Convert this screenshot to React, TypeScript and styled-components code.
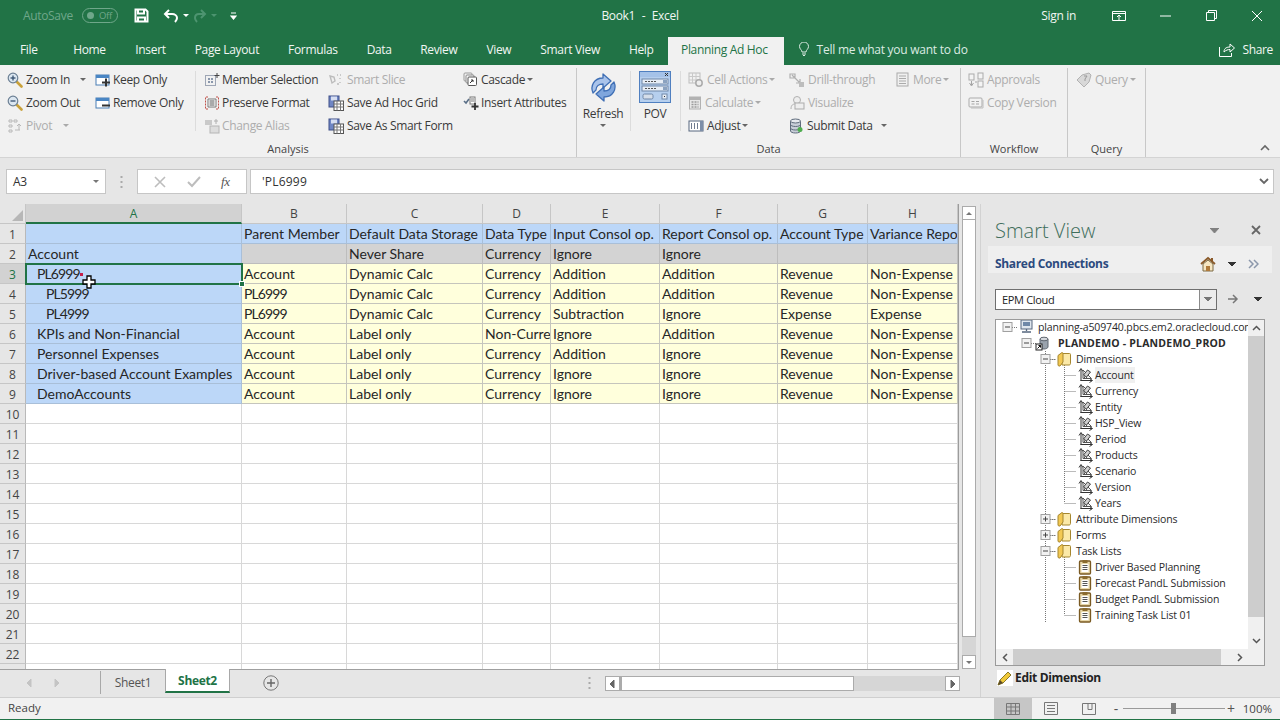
import React from 'react';
import styled, { createGlobalStyle } from 'styled-components';

const UI = '"Open Sans", "Noto Sans", sans-serif';

const Global = createGlobalStyle`
  html, body { margin: 0; padding: 0; background: #e6e6e6; overflow: hidden; }
  * { box-sizing: border-box; }
`;

const Page = styled.div`
  width: 1280px; height: 720px; display: flex; flex-direction: column; overflow: hidden;
  font-family: ${UI}; font-size: 12px; letter-spacing: -0.33px; color: #333; background: #e6e6e6;
`;

/* ---------- title bar ---------- */
const TitleBar = styled.header`
  height: 37px; flex: none; background: #217346; color: #f1f6f3;
  display: grid; grid-template-columns: 1fr auto 1fr; align-items: center; padding-bottom: 6px;
`;
const Quick = styled.div`display: flex; align-items: center; padding-left: 23px;`;
const AutoSave = styled.span`color: #6fa78a; font-size: 12px; width: 59px;`;
const Toggle = styled.span`
  width: 36px; height: 15px; border: 1px solid #6fa78a; border-radius: 8px; color: #6fa78a;
  font-size: 9.5px; display: flex; align-items: center; padding-left: 4px; gap: 5px; margin-right: 16px;
  &::before { content: ''; width: 7px; height: 7px; border-radius: 50%; background: #6fa78a; }
`;
const QuickBtn = styled.span<{ $w: number }>`width: ${p => p.$w}px; display: flex; align-items: center; gap: 4px;`;
const TitleText = styled.div`font-size: 12px; white-space: pre; word-spacing: 0.5px;`;
const WinControls = styled.div`display: flex; align-items: center; justify-content: flex-end;`;
const SignIn = styled.span`font-size: 12px; margin-right: 20px;`;
const WinBtn = styled.span`width: 46px; display: flex; justify-content: center;`;

/* ---------- tabs ---------- */
const TabBar = styled.nav`
  height: 28px; flex: none; background: #217346; color: #f1f6f3; display: flex; align-items: stretch;
`;
const Tab = styled.span<{ $active?: boolean; $pl?: number; $pr?: number }>`
  display: flex; align-items: center; font-size: 12px; padding: 0 ${p => p.$pr ?? 14.5}px 4px ${p => p.$pl ?? 14.5}px;
  ${p => p.$active ? 'background:#f1f1f1;color:#217346;padding-bottom:4px;' : ''}
`;
const TellMe = styled.span`display: flex; align-items: center; gap: 8px; padding: 0 0 4px 15px; color: #dcebe3; font-size: 12px; letter-spacing: -0.25px;`;
const Share = styled.span`margin-left: auto; display: flex; align-items: center; gap: 7px; padding: 0 7px 4px 0; font-size: 12px;`;

/* ---------- ribbon ---------- */
const Ribbon = styled.section`
  height: 93px; flex: none; background: #f1f1f1; display: flex; border-bottom: 1px solid #d4d4d4;
`;
const Group = styled.div<{ $w: number }>`
  width: ${p => p.$w}px; flex: none; display: flex; flex-direction: column;
  border-right: 1px solid #c8c8c8; margin: 3px 0 0;
`;
const GroupBody = styled.div<{ $pl: number }>`flex: 1; display: flex; padding: 0 0 0 ${p => p.$pl}px;`;
const GroupLabel = styled.div`height: 17px; text-align: center; font-size: 11px; letter-spacing: 0; color: #444; line-height: 18px;`;
const ToolCol = styled.div<{ $w: number }>`width: ${p => p.$w}px; flex: none; display: flex; flex-direction: column;`;
const Tool = styled.div<{ $dim?: boolean; $gap?: number }>`
  height: 23px; display: flex; align-items: center; gap: ${p => p.$gap ?? 3}px; font-size: 12px; white-space: nowrap;
  color: ${p => p.$dim ? '#adadad' : '#3a3a3a'};
`;
const ToolDivider = styled.div<{ $mr: number; $ml?: number }>`
  width: 1px; height: 60px; background: #dcdcdc; margin: 3px ${p => p.$mr}px 0 ${p => p.$ml ?? 0}px; flex: none;
`;
const BigTool = styled.div<{ $w: number }>`
  width: ${p => p.$w}px; flex: none; display: flex; flex-direction: column; align-items: center; font-size: 12px; color: #3a3a3a;
`;
const BigIcon = styled.div`height: 37px; padding-top: 1px; display: flex; align-items: center; justify-content: center;`;
const BigLabel = styled.div`line-height: 18px; height: 19px;`;
const RibbonEnd = styled.div`flex: 1; display: flex; align-items: flex-end; justify-content: flex-end; padding: 0 10px 6px 0;`;
const Caret = styled.span<{ $ml?: number; $c?: string; $up?: boolean }>`
  width: 0; height: 0; border-left: 3px solid transparent; border-right: 3px solid transparent;
  ${p => p.$up ? 'border-bottom' : 'border-top'}: 3px solid ${p => p.$c ?? '#666'}; margin-left: ${p => p.$ml ?? 0}px; flex: none; display: inline-block;
`;

/* ---------- formula bar ---------- */
const FormulaBar = styled.section`
  height: 46px; flex: none; background: #e6e6e6; display: flex; padding: 11px 6px 0 6px;
`;
const NameBox = styled.div`
  width: 100px; height: 25px; background: #fff; border: 1px solid #c6c6c6; display: flex; align-items: center;
  justify-content: space-between; padding: 0 6px; font-size: 12px;
`;
const Dots = styled.div`width: 31px; display: flex; justify-content: center; align-items: center; height: 25px;`;
const FxButtons = styled.div`
  width: 110px; height: 25px; background: #fff; border: 1px solid #c6c6c6; display: flex; align-items: center; justify-content: space-around; padding: 0 6px; margin-right: 3px;
`;
const FxText = styled.i`font-family: "Liberation Serif", serif; font-size: 13px; color: #555;`;
const FormulaInput = styled.div`
  flex: 1; height: 25px; background: #fff; border: 1px solid #c6c6c6; display: flex; align-items: center; justify-content: space-between;
  padding: 0 4px 0 11px; font-size: 12px; letter-spacing: 0.2px;
`;

/* ---------- main + grid ---------- */
const Main = styled.main`flex: 1; min-height: 0; display: flex;`;
const Workbook = styled.div`width: 981px; flex: none; display: flex; flex-direction: column; border-right: 1px solid #d2d2d2;`;
const SheetArea = styled.div`height: 465px; flex: none; display: flex;`;
const Grid = styled.div`
  width: 959px; height: 465px; overflow: hidden; display: grid; background: #fff;
  grid-template-columns: 26px 216px 105px 136px 68px 109px 118px 90px 90px 1px;
  grid-auto-rows: 20px; align-content: start; font-family: "Lato", sans-serif; font-size: 14px; letter-spacing: 0; color: #262626;
`;
const Corner = styled.div`
  background: #e6e6e6; border-right: 1px solid #c6c6c6; border-bottom: 1px solid #c6c6c6; position: relative;
  &::after { content: ''; position: absolute; right: 2px; bottom: 2px; border-left: 11px solid transparent; border-bottom: 11px solid #b7b7b7; }
`;
const ColHead = styled.div<{ $sel?: boolean }>`
  background: ${p => p.$sel ? '#d2d2d2' : '#e6e6e6'}; color: ${p => p.$sel ? '#217346' : '#444'};
  border-right: 1px solid #c6c6c6; border-bottom: ${p => p.$sel ? '2px solid #217346' : '1px solid #c6c6c6'};
  font: 12px ${UI}; display: flex; align-items: center; justify-content: center;
`;
const RowHead = styled.div<{ $sel?: boolean }>`
  background: ${p => p.$sel ? '#d2d2d2' : '#e6e6e6'}; color: ${p => p.$sel ? '#217346' : '#444'};
  border-right: 1px solid #b9b9b9; border-bottom: 1px solid #c6c6c6; padding-top: 2px;
  font: 12px ${UI}; display: flex; align-items: center; justify-content: center;
`;
const tones: Record<string, string> = { blue: '#bcd7f8', gray: '#d3d3d3', yellow: '#ffffdc', none: '#fff' };
const lines: Record<string, string> = { blue: '#a9bfd8', gray: '#bdbdbd', yellow: '#c5c5bd', none: '#d8d8d8' };
const Cell = styled.div<{ $tone: string; $indent?: number; $tight?: boolean }>`
  background: ${p => tones[p.$tone]};
  border-right: 1px solid ${p => lines[p.$tone]}; border-bottom: 1px solid ${p => lines[p.$tone]};
  padding-left: ${p => 2 + (p.$indent ?? 0) * 9}px; white-space: nowrap; overflow: hidden; line-height: 19.5px; position: relative;
  ${p => p.$tight ? 'letter-spacing: -0.9px;' : ''}
`;
const SelectedCell = styled(Cell)`overflow: visible; z-index: 1; outline: 2px solid #217346; outline-offset: -1px;`;
const Handle = styled.span`
  position: absolute; right: -4px; bottom: -4px; width: 6px; height: 6px; background: #217346; border: 1px solid #fff;
`;
const RedDot = styled.span`position: absolute; left: 54px; top: 9px; width: 3px; height: 3px; background: #c41e4a;`;
const CursorWrap = styled.span`position: absolute; left: 56px; top: 11px; line-height: 0;`;
const RightEdge = styled.div`background: #9c9c9c; width: 1px;`;

const VScroll = styled.div`
  width: 14px; margin: 2px 0 0 3px; display: flex; flex-direction: column; height: 463px; background: #d6d6d6;
`;
const ScrollBtn = styled.div<{ $w?: number; $h?: number }>`
  width: ${p => p.$w ?? 14}px; height: ${p => p.$h ?? 14}px; background: #fff; border: 1px solid #ababab; flex: none;
  display: flex; align-items: center; justify-content: center;
`;
const VThumb = styled.div`height: 417px; background: #fff; border: 1px solid #ababab; border-top: 0; flex: none;`;
const Spacer = styled.div`flex: 1;`;

const SheetBar = styled.div`
  height: 28px; flex: none; background: #e6e6e6; border-top: 1px solid #9f9f9f; display: flex; align-items: flex-start; position: relative; width: 959px;
`;
const SheetNav = styled.div`
  width: 101px; height: 23px; margin-top: 1px; border-right: 1px solid #a8a8a8; display: flex; align-items: center; gap: 22px; padding-left: 27px;
`;
const SheetTab = styled.div<{ $active?: boolean }>`
  width: ${p => p.$active ? 65 : 64}px; height: 24px; display: flex; align-items: center; justify-content: center; font-size: 12px; padding-top: 1px;
  color: ${p => p.$active ? '#217346' : '#555'}; font-weight: ${p => p.$active ? 700 : 400};
  ${p => p.$active ? 'background:#fff;border-left:1px solid #a8a8a8;border-right:1px solid #a8a8a8;border-bottom:2px solid #217346;margin-top:-1px;' : ''}
`;
const AddSheet = styled.div`margin: 5px 0 0 33px; line-height: 0;`;
const Grip = styled.div`margin: 7px 0 0 309px; line-height: 0;`;
const HScroll = styled.div`
  position: absolute; left: 605px; top: 6px; width: 355px; height: 15px; background: #d6d6d6; display: flex;
`;
const HThumb = styled.div`width: 234px; background: #fff; border: 1px solid #ababab; border-left-width: 2px; flex: none;`;

/* ---------- task pane ---------- */
const Pane = styled.aside`flex: 1; display: flex; flex-direction: column; background: #e6e6e6; padding: 0 0 0 7px; min-width: 0;`;
const PaneHead = styled.div`
  height: 42px; padding: 10px 19px 0 7px; display: flex; align-items: center; justify-content: space-between;
`;
const PaneTitle = styled.h2`
  margin: 0; font-weight: 300; font-size: 20px; letter-spacing: 0; color: #3f6e5c; font-family: ${UI};
`;
const PaneTools = styled.div`display: flex; align-items: center; gap: 32px;`;
const ConnBar = styled.div`
  height: 27px; margin-right: 8px; background: #efefef; display: flex; align-items: center; padding: 8px 13px 0 7px; color: #2c4a7e; font-weight: 700; font-size: 12px;
`;
const ConnTools = styled.div`margin-left: auto; display: flex; align-items: center; gap: 12px;`;
const ComboRow = styled.div`display: flex; align-items: center; padding: 16px 0 0 7px; height: 36px;`;
const Combo = styled.div`
  width: 222px; height: 21px; background: #fff; border: 1px solid #6f6f6f; display: flex; font: 11px ${UI}; color: #222;
`;
const ComboText = styled.div`flex: 1; padding-left: 6px; display: flex; align-items: center;`;
const ComboBtn = styled.div`width: 17px; background: #ececec; border-left: 1px solid #8a8a8a; display: flex; align-items: center; justify-content: center;`;
const ComboAfter = styled.div`display: flex; align-items: center; gap: 15px; margin-left: 11px;`;
const TreeBox = styled.div`
  margin: 10px 0 0 7px; width: 270px; height: 347px; background: #fff; border: 1px solid #9a9a9a;
  display: grid; grid-template-columns: 252px 16px; grid-template-rows: 1fr 16px; font-family: ${UI}; font-size: 10.5px; letter-spacing: -0.13px; color: #2a2a2a; overflow: hidden;
`;
const TreeList = styled.ul`margin: -1px 0 0; padding: 0; list-style: none; overflow: hidden;`;
const TreeRow = styled.li`height: 16px; display: flex; align-items: center; white-space: nowrap;`;
const TreeLabel = styled.span<{ $bold?: boolean; $hl?: boolean }>`
  font-weight: ${p => p.$bold ? 700 : 400}; ${p => p.$bold ? 'letter-spacing:0.2px;' : ''} ${p => p.$hl ? 'background:#f0f0f0;' : ''} line-height: 16px; padding-right: 1px;
`;
const TreeV = styled.div`display: flex; flex-direction: column; background: #f0f0f0;`;
const TreeVThumb = styled.div`height: 281px; background: #cdcdcd; flex: none;`;
const TreeArrow = styled.div`height: 16px; display: flex; align-items: center; justify-content: center; flex: none;`;
const TreeH = styled.div`display: flex; background: #f0f0f0; align-items: stretch;`;
const TreeHArrow = styled.div`width: 17px; display: flex; align-items: center; justify-content: center; flex: none;`;
const TreeHThumb = styled.div`width: 208px; background: #cdcdcd; flex: none;`;
const Corner2 = styled.div`background: #f0f0f0;`;
const EditDim = styled.div`
  display: flex; align-items: center; gap: 2px; padding: 3px 0 0 9px; font-weight: 700; font-size: 12px; color: #222;
`;

/* ---------- status ---------- */
const StatusBar = styled.footer`
  height: 23px; flex: none; background: #f1f1f1; border-top: 1px solid #cfcfcf; border-bottom: 1px solid #217346;
  display: flex; align-items: center; padding-left: 8px; font-size: 11.5px; letter-spacing: 0; color: #444;
`;
const ReadyText = styled.span`padding-bottom: 3px;`;
const ViewBtns = styled.div`margin-left: auto; display: flex; height: 100%; align-items: stretch;`;
const ViewBtn = styled.div<{ $on?: boolean }>`
  width: 38px; display: flex; align-items: center; justify-content: center; ${p => p.$on ? 'background:#c6c6c6;' : ''}
`;
const ZoomWrap = styled.div`display: flex; align-items: center; margin-left: 2px;`;
const Slider = styled.div`
  width: 102px; height: 1px; background: #9a9a9a; position: relative; margin: 0 0 0 1px;
`;
const SliderThumb = styled.span`position: absolute; left: 48px; top: -5px; width: 5px; height: 11px; background: #7f7f7f;`;
const ZoomPct = styled.span`width: 43px; text-align: right; padding-right: 8px; font-size: 11.5px;`;
const ZoomMark = styled.span`font-size: 14px; width: 12px; text-align: center; color: #555; line-height: 16px;`;

/* ---------- icons ---------- */
const S = ({ w = 16, h = 16, children }: { w?: number; h?: number; children: React.ReactNode }) => (
  <svg width={w} height={h} viewBox={`0 0 ${w} ${h}`} fill="none" style={{ flex: 'none', display: 'block' }}>{children}</svg>
);
const Mag = ({ minus }: { minus?: boolean }) => (
  <S>
    <path d="M9.500 9.500l5 5" stroke="#c9a13a" strokeWidth="2.600" strokeLinecap="round" />
    <circle cx="6" cy="6" r="4.800" fill="#dbe6f0" stroke="#6b7f93" strokeWidth="1.200" />
    <path d="M3.500 6h5" stroke="#35506e" strokeWidth="1.300" />
    {!minus && <path d="M6 3.500v5" stroke="#35506e" strokeWidth="1.300" />}
  </S>
);
const PivotI = () => (
  <S><path d="M2 2h3v2H2zM7 2h3v2H7zM2 7h3v2H2zM2 12h3v2H2zM8 12h5M12 6v6M10 8l2-2 2 2" stroke="#b8b8b8" /></S>
);
const WinI = ({ minus }: { minus?: boolean }) => (
  <S>
    <rect x="1" y="3" width="13" height="10" fill="#fff" stroke="#4a7fb5" />
    <rect x="1" y="3" width="13" height="3" fill="#4a86c4" />
    <path d="M7 10.500h8" stroke="#333" strokeWidth="2" />
    {!minus && <path d="M11 6.500v8" stroke="#333" strokeWidth="2" />}
  </S>
);
const MemberI = () => (
  <S>
    <rect x="1.500" y="3.500" width="10" height="10" stroke="#4a5a78" strokeDasharray="1 1" />
    <path d="M4 6h2v2H4zM7 6h2v2H7zM4 9h2v2H4zM7 9h2v2H7z" fill="#8a97ac" />
    <path d="M13 1v5M10.500 3.500h5" stroke="#444" />
  </S>
);
const PreserveI = () => (
  <S>
    <path d="M4 2H1.500v12H4M12 2h2.500v12H12" stroke="#c1524b" strokeDasharray="2 1" />
    <path d="M4 4h8v8H4z" fill="#fff" stroke="#777" />
    <path d="M5.500 6h5M5.500 8h5M5.500 10h5" stroke="#555" />
  </S>
);
const AliasI = () => (
  <S><rect x="1" y="2" width="7" height="5" fill="#c9c9c9" /><rect x="6" y="8" width="9" height="7" fill="#ddd" stroke="#b5b5b5" /><path d="M10 3h4M12 1v5" stroke="#b0b0b0" /></S>
);
const SliceI = () => (
  <S><path d="M2 4l4 1 1 4-3 2zM9 3h1M12 3h1M12 6v1M12 10v1M9 12h2" stroke="#bcbcbc" strokeWidth="1.400" /></S>
);
const SaveGridI = () => (
  <S>
    <rect x="1" y="1" width="10" height="11" fill="#6f86c4" stroke="#3f4f88" />
    <rect x="3" y="1.500" width="6" height="4" fill="#d6def2" />
    <rect x="6" y="6" width="9.500" height="9.500" fill="#fff" stroke="#555" />
    <path d="M6 9h9.500M6 12h9.500M9 6v9.500M12.500 6v9.500" stroke="#777" />
  </S>
);
const CascadeI = () => (
  <S w={14}>
    <rect x="1" y="1" width="8" height="8" rx="1" fill="#f2f2f2" stroke="#9a9a9a" />
    <rect x="3" y="3" width="8" height="8" rx="1" fill="#f7f7f7" stroke="#8a8a8a" />
    <rect x="5" y="5" width="8.500" height="8.500" rx="1" fill="#fff" stroke="#555" />
    <path d="M7 11l3-3M8 8h2v2" stroke="#333" />
  </S>
);
const InsertAttrI = () => (
  <S>
    <path d="M1 6l2 2 3-4" stroke="#5a6f87" strokeWidth="1.600" />
    <rect x="7" y="2" width="5" height="7" fill="#fff" stroke="#777" />
    <path d="M8 4h3M8 6h3" stroke="#777" />
    <path d="M12 8v7M8.500 11.500h7" stroke="#333" strokeWidth="1.800" />
  </S>
);
const RefreshI = () => (
  <svg width="30" height="30" viewBox="0 0 30 30" style={{ display: 'block' }}>
    <path d="M4 20C1 13 5 5 14 5V1l8 7-8 7v-4c-4 0-7 2-7 6z" transform="translate(1 1)" fill="#a9c3ea" stroke="#3f6fb5" strokeWidth="1.300" strokeLinejoin="round" />
    <path d="M26 10c3 7-1 15-10 15v4l-8-7 8-7v4c4 0 7-2 7-6z" fill="#7fa6dd" stroke="#3f6fb5" strokeWidth="1.300" strokeLinejoin="round" />
  </svg>
);
const PovI = () => (
  <svg width="32" height="32" viewBox="0 0 32 32" style={{ display: 'block' }}>
    <rect x="0.500" y="0.500" width="31" height="31" fill="#b6cfee" stroke="#4f7fc0" />
    <rect x="1" y="1" width="30" height="5" fill="#a5c2e8" />
    <path d="M26 2l3 3M29 2l-3 3" stroke="#333" />
    <rect x="3" y="8" width="26" height="5" fill="#e6edf6" stroke="#6f87a8" />
    <rect x="3" y="15" width="26" height="5" fill="#e6edf6" stroke="#6f87a8" />
    <path d="M6 10.500h12M6 17.500h12" stroke="#555" strokeDasharray="2 1" />
    <rect x="24" y="9" width="4" height="3" fill="#8aa2c0" /><rect x="24" y="16" width="4" height="3" fill="#8aa2c0" />
    <rect x="4" y="23" width="10" height="5" rx="1.500" fill="#d5deea" stroke="#6f87a8" />
    <rect x="23" y="23" width="5" height="5" fill="#e6edf6" stroke="#6f87a8" />
    <rect x="25" y="25" width="1" height="1" fill="#333" />
  </svg>
);
const CellActI = () => (
  <S>
    <rect x="1" y="1" width="11" height="10" stroke="#bdbdbd" />
    <path d="M1 4.500h11M1 8h11M4.500 1v10M8 1v10" stroke="#c9c9c9" />
    <circle cx="11" cy="11" r="3.200" fill="#eee" stroke="#ababab" strokeWidth="1.500" />
  </S>
);
const CalcI = () => (
  <S w={14}>
    <rect x="1.500" y="2" width="11" height="12" fill="#e8e8e8" stroke="#b2b2b2" />
    <rect x="1.500" y="2" width="11" height="3" fill="#b2b2b2" />
    <path d="M3.500 7h7M3.500 9.500h7M3.500 12h7" stroke="#9a9a9a" strokeWidth="1.300" strokeDasharray="2 1" />
  </S>
);
const AdjustI = () => (
  <S>
    <rect x="1" y="3" width="14" height="10" fill="#fff" stroke="#56667e" />
    <path d="M3 6h1M6 6h1M3 8h1M6 8h1M3 10h1M6 10h1M9 6h1M9 8h1M9 10h1" stroke="#42526c" strokeWidth="1.400" />
    <rect x="12" y="3" width="3" height="10" fill="#7d8ea8" />
  </S>
);
const DrillI = () => (
  <S><path d="M1 2h5v4H1zM3 3l8 8M11 7v4H7" stroke="#b0b0b0" strokeWidth="1.200" /><rect x="10" y="10" width="5" height="5" fill="#bdbdbd" /></S>
);
const VisualI = () => (
  <S><circle cx="8" cy="5" r="3.500" fill="#eee" stroke="#b0b0b0" /><path d="M2 14c0-4 2-5 4-5h4c2 0 4 1 4 5" stroke="#b0b0b0" /><rect x="6" y="8" width="9" height="6" fill="#eee" stroke="#ababab" /></S>
);
const SubmitI = () => (
  <S w={14}>
    <path d="M1.500 3v10c0 1 2 2 5 2s5-1 5-2V3" fill="#c8ced8" stroke="#5f6b7c" />
    <ellipse cx="6.500" cy="3" rx="5" ry="2" fill="#e7eaef" stroke="#5f6b7c" />
    <path d="M1.500 6.500c0 1 2 2 5 2s5-1 5-2M1.500 10c0 1 2 2 5 2s5-1 5-2" stroke="#5f6b7c" />
    <circle cx="11" cy="11.500" r="2.500" fill="#4fae4f" />
  </S>
);
const MoreI = () => (
  <S w={14}><rect x="1" y="1" width="11" height="13" fill="#f0f0f0" stroke="#aaa" /><path d="M3 4h7M3 6.500h7M3 9h7M3 11.500h7" stroke="#aaa" /></S>
);
const ApprI = () => (
  <S>
    <rect x="1" y="2" width="5" height="6" fill="#f4f4f4" stroke="#ababab" /><rect x="10" y="1" width="5" height="6" fill="#f4f4f4" stroke="#ababab" /><rect x="10" y="9" width="5" height="6" fill="#f4f4f4" stroke="#ababab" />
    <path d="M3.500 9v4M1.500 11l2 3 2-3M7 10h2" stroke="#a5a5a5" />
  </S>
);
const CopyVI = () => (
  <S>
    <rect x="1" y="3" width="13" height="9" rx="1" fill="#f2f2f2" stroke="#ababab" />
    <path d="M15 5v8H3" stroke="#bdbdbd" /><path d="M3.500 6.500h3M8 6.500h3M3.500 9h3M8 9h3" stroke="#a5a5a5" />
  </S>
);
const QueryI = () => (
  <S><path d="M1 8l5-5 7-2 2 2-2 7-5 5z" fill="#d8d8d8" stroke="#b2b2b2" /><path d="M8 4h3l-2 3v2" stroke="#999" /></S>
);

/* tree icons */
const Exp = ({ x, plus }: { x: number; plus?: boolean }) => (
  <g>
    <rect x={x - 4.5} y={3.5} width={9} height={9} fill="#f2f2f2" stroke="#a0a0a0" />
    <path d={`M${x - 2.5} 8h5`} stroke="#444" />
    {plus && <path d={`M${x} 5.500v5`} stroke="#444" />}
  </g>
);
const Dot = ({ d }: { d: string }) => <path d={d} stroke="#777" strokeDasharray="1 1" />;
const Monitor = ({ x }: { x: number }) => (
  <g transform={`translate(${x - 7} 0)`}>
    <rect x="2" y="1" width="11" height="9" fill="#dfe6ee" stroke="#56677f" />
    <rect x="4" y="3" width="7" height="4" fill="#6f88a8" />
    <path d="M7.500 10v2M3 13h9" stroke="#56677f" strokeWidth="1.300" />
  </g>
);
const Cube = ({ x }: { x: number }) => (
  <g transform={`translate(${x - 7} 0)`}>
    <path d="M5 4v8c0 1 2 2 4 2s4-1 4-2V4" fill="#9aa3ad" stroke="#5f6770" />
    <ellipse cx="9" cy="4" rx="4" ry="1.800" fill="#d3d7dc" stroke="#5f6770" />
    <rect x="1" y="9" width="6" height="6" fill="#fff" stroke="#222" />
    <path d="M2.500 13.500l3-3M3.500 10.500h2v2" stroke="#111" />
  </g>
);
const Folder = ({ x }: { x: number }) => (
  <g transform={`translate(${x - 7} 0)`}>
    <path d="M5 2.500h7.500c.8 0 1 .5 1 1v9c0 .8-.5 1.500-1.500 1.500H5z" fill="#fbe9a8" stroke="#a5862f" />
    <path d="M1 4.500L5 1.500c.5 0 1 .5 1 1v8.500L3 15H2c-.5 0-1-.5-1-1z" fill="#f3c953" stroke="#a5862f" />
  </g>
);
const DimIcon = ({ x }: { x: number }) => (
  <g transform={`translate(${x - 7.5} 0)`}>
    <path d="M3.500 14V2.500M1.500 4.500l2-3 2 3M3 13.500h11.500M12 11.500l3 2-3 2" stroke="#333" fill="none" />
    <path d="M5.500 3v8.500H14z" fill="#f4f4f4" stroke="#555" />
    <path d="M6 8l4-5 3 2-4 5z" fill="#cfcfcf" stroke="#444" />
    <path d="M7 11V9.500M9 11V10" stroke="#555" />
  </g>
);
const TaskIcon = ({ x }: { x: number }) => (
  <g transform={`translate(${x - 6.5} 0)`}>
    <rect x="1" y="2" width="11" height="13" rx="1" fill="#e8d7a8" stroke="#7a5a22" strokeWidth="1.300" />
    <rect x="4" y="1" width="5" height="3" fill="#8a6a2e" />
    <rect x="3" y="5" width="7" height="8" fill="#fff" />
    <path d="M4 6.500h5M4 8.500h5M4 10.500h5" stroke="#555" />
  </g>
);

const Ctl = ({ d, w = 16, h = 16, c = '#fff', sw = 1, fill = 'none' }: { d: string; w?: number; h?: number; c?: string; sw?: number; fill?: string }) => (
  <svg width={w} height={h} viewBox={`0 0 ${w} ${h}`} style={{ display: 'block', flex: 'none' }}>
    <path d={d} stroke={c} strokeWidth={sw} fill={fill} />
  </svg>
);

/* ---------- data ---------- */
const columns = ['A', 'B', 'C', 'D', 'E', 'F', 'G', 'H'];
const rowsData: string[][] = [
  ['', 'Parent Member', 'Default Data Storage', 'Data Type', 'Input Consol op.', 'Report Consol op.', 'Account Type', 'Variance Reporting'],
  ['Account', '', 'Never Share', 'Currency', 'Ignore', 'Ignore', '', ''],
  ['PL6999', 'Account', 'Dynamic Calc', 'Currency', 'Addition', 'Addition', 'Revenue', 'Non-Expense'],
  ['PL5999', 'PL6999', 'Dynamic Calc', 'Currency', 'Addition', 'Addition', 'Revenue', 'Non-Expense'],
  ['PL4999', 'PL6999', 'Dynamic Calc', 'Currency', 'Subtraction', 'Ignore', 'Expense', 'Expense'],
  ['KPIs and Non-Financial', 'Account', 'Label only', 'Non-Currency', 'Ignore', 'Addition', 'Revenue', 'Non-Expense'],
  ['Personnel Expenses', 'Account', 'Label only', 'Currency', 'Addition', 'Ignore', 'Revenue', 'Non-Expense'],
  ['Driver-based Account Examples', 'Account', 'Label only', 'Currency', 'Ignore', 'Ignore', 'Revenue', 'Non-Expense'],
  ['DemoAccounts', 'Account', 'Label only', 'Currency', 'Ignore', 'Ignore', 'Revenue', 'Non-Expense'],
];
const indents = [0, 0, 1, 2, 2, 1, 1, 1, 1];
const emptyRows = Array.from({ length: 14 }, (_, i) => i + 10);

type Node = { t: string; d: number; kind: 'srv' | 'cube' | 'folder' | 'dim' | 'task'; exp?: '+' | '-'; bold?: boolean; hl?: boolean; last?: boolean };
const tree: Node[] = [
  { t: 'planning-a509740.pbcs.em2.oraclecloud.com', d: 0, kind: 'srv', exp: '-' },
  { t: 'PLANDEMO - PLANDEMO_PROD', d: 1, kind: 'cube', exp: '-', bold: true },
  { t: 'Dimensions', d: 2, kind: 'folder', exp: '-' },
  { t: 'Account', d: 3, kind: 'dim', hl: true },
  { t: 'Currency', d: 3, kind: 'dim' },
  { t: 'Entity', d: 3, kind: 'dim' },
  { t: 'HSP_View', d: 3, kind: 'dim' },
  { t: 'Period', d: 3, kind: 'dim' },
  { t: 'Products', d: 3, kind: 'dim' },
  { t: 'Scenario', d: 3, kind: 'dim' },
  { t: 'Version', d: 3, kind: 'dim' },
  { t: 'Years', d: 3, kind: 'dim', last: true },
  { t: 'Attribute Dimensions', d: 2, kind: 'folder', exp: '+' },
  { t: 'Forms', d: 2, kind: 'folder', exp: '+' },
  { t: 'Task Lists', d: 2, kind: 'folder', exp: '-' },
  { t: 'Driver Based Planning', d: 3, kind: 'task' },
  { t: 'Forecast PandL Submission', d: 3, kind: 'task' },
  { t: 'Budget PandL Submission', d: 3, kind: 'task' },
  { t: 'Training Task List 01', d: 3, kind: 'task', last: true },
];
const leadW = [42, 62, 80, 99];
const expX = [11, 30, 49];
const iconX = [30, 46, 68, 89];
const TreeLead = ({ n, i }: { n: Node; i: number }) => {
  const w = leadW[n.d];
  return (
    <svg width={w} height={16} viewBox={`0 0 ${w} 16`} style={{ flex: 'none', display: 'block' }}>
      {n.d >= 2 && i > 1 && <Dot d="M49.500 0v16" />}
      {n.d === 3 && <Dot d={n.last ? 'M68.500 0v8' : 'M68.500 0v16'} />}
      {n.d === 3 && <Dot d="M68.500 8.500H80" />}
      {n.d === 2 && <Dot d="M49.500 8.500H60" />}
      {n.d === 2 && n.exp === '-' && <Dot d="M68.500 12v4" />}
      {n.exp && <Dot d={`M${expX[n.d] + 5} 8.500h5`} />}
      {n.exp && <Exp x={expX[n.d] + 0.5} plus={n.exp === '+'} />}
      {n.kind === 'srv' && <Monitor x={iconX[0]} />}
      {n.kind === 'cube' && <Cube x={iconX[1]} />}
      {n.kind === 'folder' && <Folder x={iconX[2]} />}
      {n.kind === 'dim' && <DimIcon x={iconX[3]} />}
      {n.kind === 'task' && <TaskIcon x={iconX[3]} />}
    </svg>
  );
};

export default function App() {
  return (
    <Page>
      <Global />
      <TitleBar>
        <Quick>
          <AutoSave>AutoSave</AutoSave>
          <Toggle>Off</Toggle>
          <QuickBtn $w={29}>
            <Ctl w={15} h={15} sw={2} d="M1.500 1.500h10l2 2v10h-12zM4 1.500v4h6v-4M4 13.500v-4h7v4" />
          </QuickBtn>
          <QuickBtn $w={30}>
            <Ctl w={16} h={14} sw={2} d="M6 1L2 5l4 4M2 5h7c3 0 5 2 5 4s-1 3-2 4" />
            <Caret $c="#fff" />
          </QuickBtn>
          <QuickBtn $w={37}>
            <Ctl w={14} h={14} sw={2} c="#4d9470" d="M8 1l4 4-4 4M12 5H6c-3 0-4 2-4 4s1 3 2 4" />
            <Caret $c="#4d9470" />
          </QuickBtn>
          <Ctl w={7} h={8} sw={1.2} d="M1 1h5M1 4h5l-2.500 3z" fill="#fff" />
        </Quick>
        <TitleText>Book1  -  Excel</TitleText>
        <WinControls>
          <SignIn>Sign in</SignIn>
          <WinBtn><Ctl w={14} h={12} d="M.5 1.500h13v9h-13zM.5 3.500h13M7 10V5M5 7l2-2 2 2" /></WinBtn>
          <WinBtn><Ctl w={11} h={2} d="M0 1h11" /></WinBtn>
          <WinBtn><Ctl w={11} h={11} d="M.5 2.500h8v8h-8zM2.500 2.500v-2h8v8h-2" /></WinBtn>
          <WinBtn><Ctl w={12} h={12} d="M1 1l10 10M11 1L1 11" /></WinBtn>
        </WinControls>
      </TitleBar>

      <TabBar>
        <Tab $pl={20} $pr={20}>File</Tab>
        <Tab $pl={15.5}>Home</Tab>
        <Tab $pl={15}>Insert</Tab>
        <Tab>Page Layout</Tab>
        <Tab>Formulas</Tab>
        <Tab>Data</Tab>
        <Tab $pl={14}>Review</Tab>
        <Tab>View</Tab>
        <Tab>Smart View</Tab>
        <Tab $pr={14.5}>Help</Tab>
        <Tab $active $pl={13} $pr={16}>Planning Ad Hoc</Tab>
        <TellMe>
          <Ctl w={10} h={14} c="#dcebe3" d="M3 10c0-2-2.500-3-2.500-5.500a4.500 4.500 0 019 0C9.500 7 7 8 7 10zM3 12h4M4 13.500h2" />
          Tell me what you want to do
        </TellMe>
        <Share>
          <Ctl w={16} h={15} d="M.5 5v9.500h12V11M5 10c0-4 3-5 6-5V2l4.500 4-4.500 4V7.500c-2 0-4 .5-6 2.500z" />
          Share
        </Share>
      </TabBar>

      <Ribbon>
        <Group $w={577}>
          <GroupBody $pl={7}>
            <ToolCol $w={88}>
              <Tool><Mag />Zoom In<Caret $ml={7} /></Tool>
              <Tool><Mag minus />Zoom Out</Tool>
              <Tool $dim><PivotI />Pivot<Caret $ml={8} $c="#aaa" /></Tool>
            </ToolCol>
            <ToolCol $w={100}>
              <Tool $gap={2}><WinI />Keep Only</Tool>
              <Tool $gap={2}><WinI minus />Remove Only</Tool>
            </ToolCol>
            <ToolDivider $mr={8} />
            <ToolCol $w={124}>
              <Tool $gap={2}><MemberI />Member Selection</Tool>
              <Tool $gap={2}><PreserveI />Preserve Format</Tool>
              <Tool $dim $gap={2}><AliasI />Change Alias</Tool>
            </ToolCol>
            <ToolCol $w={135}>
              <Tool $dim><SliceI />Smart Slice</Tool>
              <Tool><SaveGridI />Save Ad Hoc Grid</Tool>
              <Tool><SaveGridI />Save As Smart Form</Tool>
            </ToolCol>
            <ToolCol $w={106}>
              <Tool $gap={4}><CascadeI />Cascade<Caret $ml={-2} /></Tool>
              <Tool $gap={2}><InsertAttrI />Insert Attributes</Tool>
            </ToolCol>
          </GroupBody>
          <GroupLabel>Analysis</GroupLabel>
        </Group>
        <Group $w={384}>
          <GroupBody $pl={6}>
            <BigTool $w={40}>
              <BigIcon><RefreshI /></BigIcon>
              <BigLabel>Refresh</BigLabel>
              <Caret />
            </BigTool>
            <ToolDivider $mr={8} $ml={7} />
            <BigTool $w={32}>
              <BigIcon><PovI /></BigIcon>
              <BigLabel>POV</BigLabel>
            </BigTool>
            <ToolDivider $mr={7} $ml={9} />
            <ToolCol $w={101}>
              <Tool $dim><CellActI />Cell Actions<Caret $ml={-1} $c="#aaa" /></Tool>
              <Tool $dim><CalcI />Calculate<Caret $ml={-1} $c="#aaa" /></Tool>
              <Tool><AdjustI />Adjust<Caret $ml={-1} /></Tool>
            </ToolCol>
            <ToolCol $w={107}>
              <Tool $dim><DrillI />Drill-through</Tool>
              <Tool $dim><VisualI />Visualize</Tool>
              <Tool $gap={4}><SubmitI />Submit Data<Caret $ml={4} /></Tool>
            </ToolCol>
            <ToolCol $w={60}>
              <Tool $dim><MoreI />More<Caret $ml={-1} $c="#aaa" /></Tool>
            </ToolCol>
          </GroupBody>
          <GroupLabel>Data</GroupLabel>
        </Group>
        <Group $w={107}>
          <GroupBody $pl={7}>
            <ToolCol $w={98}>
              <Tool $dim><ApprI />Approvals</Tool>
              <Tool $dim><CopyVI />Copy Version</Tool>
            </ToolCol>
          </GroupBody>
          <GroupLabel>Workflow</GroupLabel>
        </Group>
        <Group $w={78}>
          <GroupBody $pl={8}>
            <ToolCol $w={68}>
              <Tool $dim><QueryI />Query<Caret $ml={-1} $c="#aaa" /></Tool>
            </ToolCol>
          </GroupBody>
          <GroupLabel>Query</GroupLabel>
        </Group>
        <RibbonEnd><Ctl w={10} h={7} c="#666" sw={1.6} d="M1 6l4-4 4 4" /></RibbonEnd>
      </Ribbon>

      <FormulaBar>
        <NameBox>A3<Caret $c="#777" /></NameBox>
        <Dots><Ctl w={3} h={12} c="#aaa" sw={2} d="M1.500 0v2M1.500 5v2M1.500 10v2" /></Dots>
        <FxButtons>
          <Ctl w={12} h={12} c="#bdbdbd" sw={1.6} d="M1 1l10 10M11 1L1 11" />
          <Ctl w={14} h={12} c="#bdbdbd" sw={2} d="M1 6l4 4 8-9" />
          <FxText>fx</FxText>
        </FxButtons>
        <FormulaInput>'PL6999<Ctl w={10} h={7} c="#666" sw={1.8} d="M1 1l4 4 4-4" /></FormulaInput>
      </FormulaBar>

      <Main>
        <Workbook>
          <SheetArea>
            <Grid>
              <Corner />
              {columns.map((c, i) => <ColHead key={c} $sel={i === 0}>{c}</ColHead>)}
              <RightEdge />
              {rowsData.map((row, r) => (
                <React.Fragment key={r}>
                  <RowHead $sel={r === 2}>{r + 1}</RowHead>
                  {row.map((v, c) => {
                    const tone = c === 0 || r === 0 ? 'blue' : r === 1 ? 'gray' : 'yellow';
                    const tight = /^PL\d/.test(v);
                    if (r === 2 && c === 0) {
                      return (
                        <SelectedCell key={c} $tone={tone} $indent={1} $tight>
                          {v}
                          <RedDot />
                          <CursorWrap>
                            <svg width="14" height="14" viewBox="0 0 14 14"><path d="M5 1h4v4h4v4H9v4H5V9H1V5h4z" fill="#fff" stroke="#000" strokeWidth="1.300" /></svg>
                          </CursorWrap>
                          <Handle />
                        </SelectedCell>
                      );
                    }
                    return <Cell key={c} $tone={tone} $tight={tight} $indent={c === 0 ? indents[r] : 0}>{v}</Cell>;
                  })}
                  <RightEdge />
                </React.Fragment>
              ))}
              {emptyRows.map(n => (
                <React.Fragment key={n}>
                  <RowHead>{n < 23 ? n : ''}</RowHead>
                  {columns.map(c => <Cell key={c} $tone="none" />)}
                  <RightEdge />
                </React.Fragment>
              ))}
            </Grid>
            <VScroll>
              <ScrollBtn><Caret $c="#777" $up /></ScrollBtn>
              <VThumb />
              <Spacer />
              <ScrollBtn><Caret $c="#777" /></ScrollBtn>
            </VScroll>
          </SheetArea>
          <SheetBar>
            <SheetNav>
              <Ctl w={5} h={8} c="#c4c4c4" fill="#c4c4c4" d="M4 0v8L0 4z" />
              <Ctl w={5} h={8} c="#c4c4c4" fill="#c4c4c4" d="M1 0v8l4-4z" />
            </SheetNav>
            <SheetTab>Sheet1</SheetTab>
            <SheetTab $active>Sheet2</SheetTab>
            <AddSheet>
              <svg width="16" height="16" viewBox="0 0 16 16"><circle cx="8" cy="8" r="7.200" fill="none" stroke="#777" /><path d="M8 4v8M4 8h8" stroke="#666" strokeWidth="1.400" /></svg>
            </AddSheet>
            <Grip><Ctl w={3} h={12} c="#aaa" sw={2} d="M1.500 0v2M1.500 5v2M1.500 10v2" /></Grip>
            <HScroll>
              <ScrollBtn $w={15} $h={15}><Ctl w={5} h={8} c="#666" fill="#666" d="M4 0v8L0 4z" /></ScrollBtn>
              <HThumb />
              <Spacer />
              <ScrollBtn $w={15} $h={15}><Ctl w={5} h={8} c="#666" fill="#666" d="M1 0v8l4-4z" /></ScrollBtn>
            </HScroll>
          </SheetBar>
        </Workbook>

        <Pane>
          <PaneHead>
            <PaneTitle>Smart View</PaneTitle>
            <PaneTools>
              <Ctl w={9} h={5} c="#808080" fill="#808080" d="M0 0h9L4.500 5z" />
              <Ctl w={10} h={10} c="#666" sw={1.800} d="M1 1l8 8M9 1L1 9" />
            </PaneTools>
          </PaneHead>
          <ConnBar>
            Shared Connections
            <ConnTools>
              <svg width="16" height="16" viewBox="0 0 16 16" style={{ display: 'block' }}>
                <path d="M1 8l7-6 7 6" stroke="#8a5a2a" strokeWidth="1.800" fill="none" />
                <path d="M3 8l5-4 5 4v7H3z" fill="#f6e6c2" stroke="#7c6a44" />
                <rect x="6" y="10" width="4" height="5" fill="#b07a3a" />
                <rect x="11" y="2" width="2" height="3" fill="#8a5a2a" />
              </svg>
              <Ctl w={8} h={4} c="#333" fill="#333" d="M0 0h8L4 4z" />
              <Ctl w={11} h={10} c="#8b97ab" sw={1.500} d="M1 1l4 4-4 4M6 1l4 4-4 4" />
            </ConnTools>
          </ConnBar>
          <ComboRow>
            <Combo>
              <ComboText>EPM Cloud</ComboText>
              <ComboBtn><Ctl w={8} h={4} c="#777" fill="#777" d="M0 0h8L4 4z" /></ComboBtn>
            </Combo>
            <ComboAfter>
              <Ctl w={11} h={10} c="#777" sw={1.500} d="M0 5h9M5 1l4 4-4 4" />
              <Ctl w={8} h={4} c="#333" fill="#333" d="M0 0h8L4 4z" />
            </ComboAfter>
          </ComboRow>
          <TreeBox>
            <TreeList>
              {tree.map((n, i) => (
                <TreeRow key={n.t}>
                  <TreeLead n={n} i={i} />
                  <TreeLabel $bold={n.bold} $hl={n.hl}>{n.t}</TreeLabel>
                </TreeRow>
              ))}
            </TreeList>
            <TreeV>
              <TreeArrow><Ctl w={9} h={6} c="#555" sw={1.500} d="M1 5l3.500-3.500L8 5" /></TreeArrow>
              <TreeVThumb />
              <Spacer />
              <TreeArrow><Ctl w={9} h={6} c="#555" sw={1.500} d="M1 1l3.500 3.500L8 1" /></TreeArrow>
            </TreeV>
            <TreeH>
              <TreeHArrow><Ctl w={6} h={9} c="#555" sw={1.500} d="M5 1L1.500 4.500 5 8" /></TreeHArrow>
              <TreeHThumb />
              <Spacer />
              <TreeHArrow><Ctl w={6} h={9} c="#555" sw={1.500} d="M1 1l3.500 3.500L1 8" /></TreeHArrow>
            </TreeH>
            <Corner2 />
          </TreeBox>
          <EditDim>
            <svg width="16" height="16" viewBox="0 0 16 16" style={{ display: 'block' }}>
              <rect width="16" height="16" fill="#fff" />
              <path d="M1 15l2-5 8-8 3 3-8 8z" fill="#f0c93a" stroke="#8a7a2a" />
              <path d="M1 15l2-5 3 3z" fill="#5a4a2a" />
            </svg>
            Edit Dimension
          </EditDim>
        </Pane>
      </Main>

      <StatusBar>
        <ReadyText>Ready</ReadyText>
        <ViewBtns>
          <ViewBtn $on><Ctl w={14} h={12} c="#777" d="M.5.5h13v11H.5zM.5 4h13M.5 8h13M5 .5v11M9.500 .5v11" /></ViewBtn>
          <ViewBtn><Ctl w={14} h={13} c="#777" d="M.5.5h13v12H.5zM3 3.500h8M3 6.500h8M3 9.500h8" /></ViewBtn>
          <ViewBtn><Ctl w={14} h={12} c="#777" d="M.5 11.500V.5h13v11zM6 .5v6h4v-6" /></ViewBtn>
        </ViewBtns>
        <ZoomWrap>
          <ZoomMark>-</ZoomMark>
          <Slider><SliderThumb /></Slider>
          <ZoomMark>+</ZoomMark>
          <ZoomPct>100%</ZoomPct>
        </ZoomWrap>
      </StatusBar>
    </Page>
  );
}
